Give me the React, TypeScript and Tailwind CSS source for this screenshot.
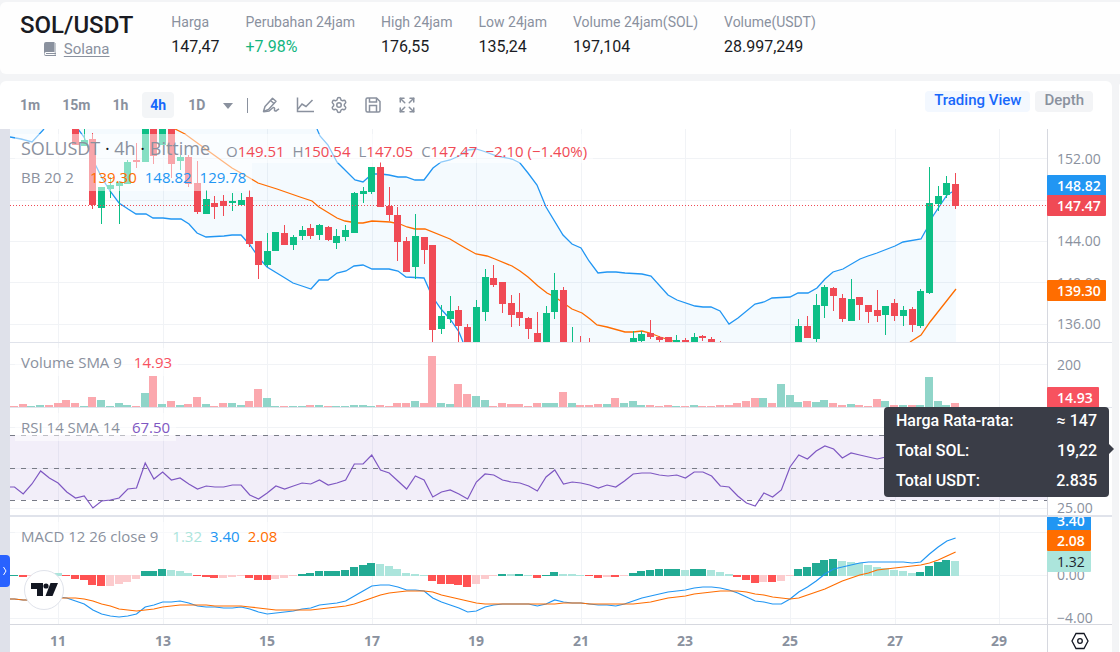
import { Expand, Settings } from "lucide-react";

const STEP = 8.714;
const FIRST_X = 14.5;
const barX = (index: number) => FIRST_X + index * STEP;

const UP = "#0dbf86";
const DOWN = "#f04a55";
const BLUE = "#2196f3";
const ORANGE = "#ff6d00";
const GRID = "#f1f3f6";

const stats = [
  { label: "Harga", value: "147,47" },
  { label: "Perubahan 24jam", value: "+7.98%", up: true },
  { label: "High 24jam", value: "176,55" },
  { label: "Low 24jam", value: "135,24" },
  { label: "Volume 24jam(SOL)", value: "197,104" },
  { label: "Volume(USDT)", value: "28.997,249" },
];

const intervals = ["1m", "15m", "1h", "4h", "1D"];

const days = [
  { label: "11", x: 58 },
  { label: "13", x: 163 },
  { label: "15", x: 267 },
  { label: "17", x: 372 },
  { label: "19", x: 476 },
  { label: "21", x: 581 },
  { label: "23", x: 685 },
  { label: "25", x: 790 },
  { label: "27", x: 895 },
  { label: "29", x: 999 },
];

// index, 1 = up / 0 = down, body top, body bottom, wick top, wick bottom
const candles = [
  [7, 0, 129, 145, 129, 145],
  [8, 1, 140, 146, 129, 146],
  [9, 0, 139, 205, 133, 209],
  [10, 1, 187, 208, 187, 224],
  [11, 1, 185, 189, 177, 198],
  [12, 1, 182, 186, 181, 224],
  [13, 1, 162, 184, 160, 184],
  [14, 0, 160, 162, 143, 168],
  [15, 1, 129, 162, 129, 162],
  [16, 0, 129, 156, 129, 164],
  [17, 1, 129, 145, 129, 145],
  [18, 0, 129, 164, 129, 178],
  [19, 1, 157, 161, 155, 170],
  [20, 0, 157, 184, 155, 187],
  [21, 0, 183, 212, 161, 214],
  [22, 1, 199, 214, 190, 214],
  [23, 0, 203, 207, 196, 219],
  [24, 0, 201, 206, 195, 216],
  [25, 1, 201, 203, 193, 211],
  [26, 1, 200, 205, 193, 205],
  [27, 0, 197, 244, 190, 247],
  [28, 0, 241, 265, 241, 279],
  [29, 1, 251, 265, 233, 267],
  [30, 1, 232, 251, 232, 251],
  [31, 0, 233, 245, 225, 245],
  [32, 1, 237, 245, 235, 250],
  [33, 1, 230, 236, 226, 240],
  [34, 0, 228, 236, 224, 239],
  [35, 1, 225, 235, 224, 240],
  [36, 0, 227, 240, 226, 241],
  [37, 1, 236, 243, 229, 249],
  [38, 1, 230, 237, 225, 241],
  [39, 1, 193, 233, 192, 233],
  [40, 1, 191, 194, 187, 203],
  [41, 1, 167, 192, 167, 194],
  [42, 0, 167, 207, 162, 207],
  [43, 0, 206, 215, 187, 221],
  [44, 0, 215, 242, 207, 261],
  [45, 0, 241, 272, 237, 272],
  [46, 1, 236, 267, 214, 279],
  [47, 0, 237, 250, 237, 264],
  [48, 0, 245, 330, 245, 342],
  [49, 1, 316, 329, 305, 334],
  [50, 1, 311, 319, 296, 323],
  [51, 0, 310, 326, 306, 342],
  [52, 0, 327, 342, 324, 342],
  [53, 1, 307, 342, 300, 342],
  [54, 1, 277, 312, 269, 321],
  [55, 0, 278, 285, 265, 287],
  [56, 0, 282, 304, 282, 313],
  [57, 0, 303, 315, 295, 327],
  [58, 0, 312, 318, 293, 326],
  [59, 0, 318, 329, 317, 339],
  [60, 0, 333, 342, 312, 342],
  [61, 1, 313, 342, 306, 342],
  [62, 1, 290, 312, 273, 319],
  [63, 0, 290, 342, 287, 342],
  [64, 1, 342, 343, 327, 342],
  [65, 0, 342, 343, 336, 342],
  [66, 0, 342, 343, 338, 342],
  [71, 1, 338, 342, 331, 342],
  [72, 1, 334, 341, 331, 342],
  [73, 0, 333, 337, 320, 339],
  [74, 0, 337, 340, 336, 342],
  [75, 0, 337, 342, 337, 342],
  [76, 1, 340, 342, 335, 342],
  [77, 0, 340, 342, 338, 342],
  [78, 1, 337, 342, 333, 342],
  [79, 0, 336, 338, 335, 341],
  [80, 0, 339, 342, 337, 342],
  [81, 0, 342, 343, 341, 342],
  [90, 1, 326, 342, 319, 342],
  [91, 0, 326, 338, 316, 338],
  [92, 1, 305, 339, 294, 342],
  [93, 1, 287, 306, 285, 318],
  [94, 0, 288, 296, 287, 311],
  [95, 0, 298, 319, 294, 322],
  [96, 1, 299, 321, 279, 321],
  [97, 0, 297, 305, 297, 320],
  [98, 0, 305, 312, 305, 323],
  [99, 0, 310, 316, 290, 322],
  [100, 1, 306, 315, 306, 335],
  [101, 0, 303, 316, 299, 321],
  [102, 1, 310, 316, 306, 326],
  [103, 0, 309, 325, 307, 332],
  [104, 1, 291, 326, 289, 328],
  [105, 1, 203, 293, 167, 294],
  [106, 1, 196, 204, 186, 211],
  [107, 1, 183, 195, 176, 198],
  [108, 0, 184, 206, 173, 209],
];

const upperBand =
  "317,129 320,136 328,145 337,162 355,180 363,182 372,174 381,174 389,175 398,177 406,177 415,180 424,180 433,168 441,162 450,160 459,156 468,150 476,149 483,151 497,156 512,159 520,163 528,173 537,185 546,207 563,235 572,244 581,248 589,261 598,273 607,272 616,272 625,273 642,274 651,276 668,295 677,300 695,306 703,307 711,307 720,311 729,324 738,318 755,304 764,302 772,298 790,297 798,293 808,293 817,288 825,279 833,272 843,269 860,259 868,256 877,253 895,246 903,242 921,239 926,230 933,216 947,195 952,192 956,191";
const lowerBandStart = "10,137 21,139 32,142 44,129";
const lowerBand =
  "78,129 84,137 93,160 102,178 110,191 119,203 128,209 136,214 146,214 153,218 163,218 171,219 181,219 189,224 197,233 206,237 224,236 232,235 241,235 250,245 259,258 267,267 285,278 293,283 302,286 311,289 319,280 328,280 337,273 346,271 354,266 363,265 372,269 389,269 398,271 406,277 424,278 432,296 441,309 450,319 459,332 463,342";
const middleBand =
  "175,129 185,134 207,150 232,168 248,177 258,183 277,189 300,197 312,201 319,207 337,218 345,221 357,223 363,223 372,221 390,222 400,224 407,227 415,229 425,229 450,239 460,245 467,249 476,254 487,256 495,259 512,266 520,271 528,277 538,286 547,293 555,297 572,309 582,313 590,319 597,325 607,327 625,332 633,332 642,331 650,333 660,337 673,341 677,343";
const middleBandEnd = "910,342 921,335 930,322 956,289";

const volumes =
  "r1 r3 g1 g2 r2 r4 r7 r4 g1 r10 g7 g1 g4 g2 r1 g14 r31 g3 r6 g2 r3 r10 g3 r1 r4 g4 g2 r6 r18 g9 g1 r1 g1 g1 r2 g2 r1 g1 g1 g2 g2 g1 r2 r1 r4 r4 g6 r4 r51 g4 g3 r23 r13 g11 g7 r1 r4 r3 r3 r1 r4 g4 g4 r15 g4 r2 r2 r3 g3 r9 g4 g6 g2 r2 r1 r2 g1 r1 g2 r1 r1 r2 r2 r4 r6 r9 g9 r4 g23 g12 g5 r6 g5 g7 r4 r2 g3 r2 r1 r8 g6 r2 g2 r2 g2 g30 g6 g2 r4".split(
    " ",
  );

// capital letter = growing bar, small letter = shrinking bar
const histogram =
  "G1 R2 r1 G2 G3 g3 R1 R4 R5 R10 R11 r11 r9 r7 r4 G5 G5 G7 g6 g5 g3 R1 R2 R3 r3 r2 r1 R3 R5 R5 r4 r3 r1 G2 G3 G5 G5 G5 G6 G9 G11 G13 g12 g10 g7 g3 g2 g1 R6 R9 R9 R10 R12 r9 r4 r1 G2 g2 G2 g1 R3 G1 G4 g2 g2 g1 R1 R3 r2 R2 r1 G3 G5 G6 G7 G7 G7 g6 G7 G7 g6 g4 g2 R2 R5 R8 r7 R7 r6 r1 G7 G9 G13 G16 G17 g15 g14 g13 g11 g9 g8 g6 g5 g3 G4 G10 G14 G16 g15".split(
    " ",
  );

const histogramColors: Record<string, string> = {
  G: "#22ab94",
  g: "#ace5dc",
  R: "#ff5252",
  r: "#fccbcd",
};

const rsi = [
  487, 494, 484, 471, 478, 483, 492, 498, 496, 508, 501, 500, 498, 489, 488,
  463, 479, 472, 480, 478, 484, 489, 486, 487, 487, 485, 485, 495, 499, 493,
  486, 489, 486, 483, 484, 480, 485, 483, 480, 464, 464, 455, 470, 473, 481,
  489, 476, 480, 497, 492, 490, 494, 499, 482, 474, 475, 480, 482, 483, 486,
  491, 477, 470, 484, 482, 483, 485, 488, 485, 487, 481, 474, 473, 473, 475,
  476, 475, 478, 472, 472, 476, 486, 487, 496, 503, 506, 493, 497, 490, 467,
  455, 459, 451, 446, 449, 458, 453, 455, 457, 459, 457,
];

const macd = [
  599, 600, 600, 599, 598, 597, 598, 601, 604, 610, 614, 616, 617, 616, 614,
  607, 605, 602, 602, 601, 603, 606, 607, 607, 608, 608, 607, 609, 612, 614,
  613, 612, 611, 609, 608, 605, 604, 603, 601, 596, 591, 586, 585, 585, 587,
  590, 590, 591, 598, 602, 605, 608, 612, 611, 607, 605, 604, 604, 604, 604,
  606, 604, 600, 602, 603, 603, 604, 605, 605, 606, 604, 601, 598, 596, 594,
  592, 591, 590, 588, 587, 587, 588, 590, 593, 597, 601, 602, 604, 604, 599,
  592, 587, 581, 574, 569, 567, 565, 563, 562, 562, 562, 562, 562, 563, 562,
  554, 547, 541, 538,
];

const signal = [
  599, 600, 600, 599, 598, 598, 598, 598, 599, 601, 604, 606, 609, 610, 611,
  610, 609, 607, 606, 605, 605, 605, 605, 606, 606, 606, 606, 607, 608, 609,
  610, 610, 610, 610, 610, 609, 608, 607, 606, 604, 601, 598, 595, 593, 592,
  591, 591, 591, 592, 595, 597, 599, 601, 603, 604, 604, 604, 604, 604, 604,
  604, 604, 604, 603, 603, 603, 604, 604, 604, 604, 604, 604, 603, 602, 600,
  598, 597, 596, 594, 593, 592, 591, 591, 591, 592, 594, 595, 597, 598, 599,
  598, 595, 592, 589, 585, 581, 578, 575, 573, 570, 569, 568, 567, 566, 565,
  563, 560, 556, 552,
];

const toPoints = (values: number[]) =>
  `10,${values[0]} ` + values.map((y, i) => `${barX(i)},${y}`).join(" ");

type PaneProps = {
  top: number;
  height: number;
  className: string;
  grid: number[];
  label: string;
  children: React.ReactNode;
};

const Plot = ({ top, height, className, grid, label, children }: PaneProps) => (
  <svg
    role="img"
    aria-label={label}
    viewBox={`10 ${top} 1037 ${height}`}
    preserveAspectRatio="none"
    className={`block w-full min-w-0 flex-1 ${className}`}>
    {days.map((day) => (
      <rect key={day.x} x={day.x} y={top} width={1} height={height} fill={GRID} />
    ))}
    {grid.map((y) => (
      <rect key={y} x={10} y={y} width={1037} height={1} fill={GRID} />
    ))}
    {children}
  </svg>
);

type Tick = { y: number; text: string };
type Badge = Tick & { fill: string; width: number; dark?: boolean };

type ScaleProps = {
  top: number;
  height: number;
  className: string;
  ticks: Tick[];
  badges: Badge[];
};

const Scale = ({ top, height, className, ticks, badges }: ScaleProps) => (
  <svg
    viewBox={`0 ${top} 65 ${height}`}
    className={`block w-[65px] shrink-0 overflow-hidden text-[14px] ${className}`}>
    <rect x={0} y={top} width={1} height={height} fill="#d6d8df" />
    {ticks.map((tick) => (
      <text key={tick.text} x={10} y={tick.y + 5} fill="#8a919e">
        {tick.text}
      </text>
    ))}
    {badges.map((badge) => (
      <g key={badge.text}>
        <rect x={0} y={badge.y - 10} width={badge.width} height={21} rx={1} fill={badge.fill} />
        <text
          x={10}
          y={badge.y + 6}
          fontWeight={badge.dark ? 400 : 600}
          fill={badge.dark ? "#20242f" : "#ffffff"}>
          {badge.text}
        </text>
      </g>
    ))}
  </svg>
);

const Ohlc = ({ name, value }: { name: string; value: string }) => (
  <span>
    {name}
    <span className="text-[#f04a55]">{value}</span>
  </span>
);

const PricePane = () => (
  <div className="relative flex border-b border-[#e0e3eb]">
    <Plot
      top={129}
      height={213}
      className="h-[213px]"
      label="Price"
      grid={[158, 200, 241, 282, 324]}>
      <polygon
        fill="#2196f3"
        fillOpacity={0.05}
        points={`10,129 ${lowerBandStart} ${lowerBand} 956,342 ${upperBand.split(" ").reverse().join(" ")}`}
      />
      <g fill="none" strokeWidth={1.3}>
        <polyline points={middleBand} stroke={ORANGE} />
        <polyline points={middleBandEnd} stroke={ORANGE} />
        <polyline points={upperBand} stroke={BLUE} />
        <polyline points={lowerBandStart} stroke={BLUE} />
        <polyline points={lowerBand} stroke={BLUE} />
      </g>
      {candles.map(([index, up, top, bottom, high, low]) => {
        const x = Math.floor(barX(index));
        return (
          <g key={index} fill={up ? UP : DOWN}>
            <rect x={x} y={high} width={1} height={low - high} />
            <rect x={x - 3} y={top} width={7} height={bottom - top} />
          </g>
        );
      })}
      <line x1={10} x2={1047} y1={205.5} y2={205.5} stroke={DOWN} strokeDasharray="1 2" />
    </Plot>
    <Scale
      top={129}
      height={213}
      className="h-[213px]"
      ticks={[
        { y: 159, text: "152.00" },
        { y: 241, text: "144.00" },
        { y: 283, text: "140.00" },
        { y: 324, text: "136.00" },
      ]}
      badges={[
        { y: 185, text: "148.82", fill: BLUE, width: 59 },
        { y: 205, text: "147.47", fill: DOWN, width: 59 },
        { y: 290, text: "139.30", fill: ORANGE, width: 59 },
      ]}
    />
    <div className="absolute top-[5px] left-[5px] flex flex-col items-start text-[15px] text-[#8a919e]">
      <div className="flex h-[29px] items-center gap-4 bg-white/50 px-1.5">
        <h2 className="text-[18px]">
          SOLUSDT <span className="text-[#131722]">·</span> 4h{" "}
          <span className="text-[#131722]">·</span> Bittime
        </h2>
        <p className="flex gap-2 pt-1.5">
          <Ohlc name="O" value="149.51" />
          <Ohlc name="H" value="150.54" />
          <Ohlc name="L" value="147.05" />
          <Ohlc name="C" value="147.47" />
          <span className="text-[#f04a55]">−2.10 (−1.40%)</span>
        </p>
      </div>
      <div className="flex h-7 items-center gap-2 bg-white/50 px-1.5">
        <span className="mr-2">BB 20 2</span>
        <span className="text-[#ff6d00]">139.30</span>
        <span className="text-[#2196f3]">148.82</span>
        <span className="text-[#2196f3]">129.78</span>
      </div>
    </div>
  </div>
);

const VolumePane = () => (
  <div className="relative flex border-b border-[#e0e3eb]">
    <Plot top={343} height={64} className="h-16" label="Volume" grid={[364]}>
      {volumes.map((bar, index) => {
        const size = Number(bar.slice(1));
        return (
          <rect
            key={index}
            x={Math.floor(barX(index)) - 4}
            y={407 - size}
            width={8}
            height={size}
            fill={bar[0] === "g" ? "#90d5c9" : "#fba8ae"}
          />
        );
      })}
    </Plot>
    <Scale
      top={343}
      height={64}
      className="h-16"
      ticks={[{ y: 365, text: "200" }]}
      badges={[{ y: 397, text: "14.93", fill: "#f7525f", width: 52 }]}
    />
    <div className="absolute top-[5px] left-[5px] flex h-7 items-center gap-3 bg-white/50 px-1.5 text-[15px] text-[#8a919e]">
      Volume SMA 9 <span className="text-[#f7525f]">14.93</span>
    </div>
  </div>
);

const RsiPane = () => (
  <div className="relative flex border-b-2 border-[#e0e3eb]">
    <Plot top={408} height={107} className="h-[107px]" label="RSI" grid={[427, 468, 508]}>
      <rect x={10} y={435} width={1037} height={65} fill="#7e57c2" fillOpacity={0.1} />
      {[435.5, 468.5, 500.5].map((y) => (
        <line key={y} x1={10} x2={1047} y1={y} y2={y} stroke="#787b86" strokeDasharray="5 6" />
      ))}
      <polyline points={toPoints(rsi)} fill="none" stroke="#7e57c2" strokeWidth={1.2} />
    </Plot>
    <Scale
      top={408}
      height={107}
      className="h-[107px]"
      ticks={[{ y: 508, text: "25.00" }]}
      badges={[]}
    />
    <div className="absolute top-[5px] left-[5px] flex h-7 items-center gap-3 bg-white/50 px-1.5 text-[15px] text-[#8a919e]">
      RSI 14 SMA 14 <span className="text-[#7e57c2]">67.50</span>
    </div>
  </div>
);

const MacdPane = () => (
  <div className="relative flex border-b border-[#d6d8df]">
    <Plot top={517} height={107} className="h-[107px]" label="MACD" grid={[532, 575, 618]}>
      {histogram.map((bar, index) => {
        const size = Number(bar.slice(1));
        const positive = bar[0].toUpperCase() === "G";
        return (
          <rect
            key={index}
            x={Math.floor(barX(index)) - 4}
            y={positive ? 576 - size : 575}
            width={8}
            height={size}
            fill={histogramColors[bar[0]]}
          />
        );
      })}
      <polyline points={toPoints(macd)} fill="none" stroke={BLUE} strokeWidth={1.2} />
      <polyline points={toPoints(signal)} fill="none" stroke={ORANGE} strokeWidth={1.2} />
    </Plot>
    <Scale
      top={517}
      height={107}
      className="h-[107px]"
      ticks={[
        { y: 575, text: "0.00" },
        { y: 618, text: "−4.00" },
      ]}
      badges={[
        { y: 520, text: "3.40", fill: BLUE, width: 44 },
        { y: 540, text: "2.08", fill: ORANGE, width: 44 },
        { y: 561, text: "1.32", fill: "#ace5dc", width: 44, dark: true },
      ]}
    />
    <div className="absolute top-[5px] left-[5px] flex h-7 items-center gap-2 bg-white/50 px-1.5 text-[15px] text-[#8a919e]">
      <span className="mr-1.5">MACD 12 26 close 9</span>
      <span className="text-[#ace5dc]">1.32</span>
      <span className="text-[#2196f3]">3.40</span>
      <span className="text-[#ff6d00]">2.08</span>
    </div>
    <a
      href="#tradingview"
      aria-label="TradingView"
      className="absolute bottom-[14px] left-[14px] flex size-10 items-center justify-center rounded-full border border-[#e0e3eb] bg-white">
      <svg viewBox="0 0 28 14" className="h-[14px] w-7" fill="#131722">
        <path d="M1 0h12v13H7V6H1z" />
        <circle cx="16" cy="3" r="2.6" />
        <path d="M20.500 0H28l-5.500 13h-7z" />
      </svg>
    </a>
  </div>
);

const TimeAxis = () => (
  <div className="flex h-[27px]">
    <svg className="h-[27px] min-w-0 flex-1 text-[14px] font-bold" fill="#8a919e">
      {days.map((day) => (
        <text key={day.label} x={`${((day.x - 10) / 1037) * 100}%`} y={21} textAnchor="middle">
          {day.label}
        </text>
      ))}
    </svg>
    <button
      type="button"
      aria-label="Scale settings"
      className="flex w-[65px] items-end justify-center border-l border-[#d6d8df] pb-0.5 text-[#131722]">
      <svg viewBox="0 0 18 18" className="size-[18px]" fill="none" stroke="currentColor" strokeWidth={1.3}>
        <path d="M5 1.500h8L17 9l-4 7.500H5L1 9z" />
        <circle cx="9" cy="9" r="2.300" />
      </svg>
    </button>
  </div>
);

const Tooltip = () => (
  <div
    role="tooltip"
    className="absolute top-[326px] right-[3px] w-[225px] rounded bg-[#3a3d47] px-3 pt-px pb-[3px] font-['Roboto',sans-serif] text-[16px] leading-[26px] font-medium text-white">
    <dl className="grid grid-cols-[1fr_auto] gap-y-1">
      <dt>Harga Rata-rata:</dt>
      <dd className="text-right">≈ 147</dd>
      <dt>Total SOL:</dt>
      <dd className="text-right">19,22</dd>
      <dt>Total USDT:</dt>
      <dd className="text-right">2.835</dd>
    </dl>
    <svg viewBox="0 0 5 10" className="absolute top-[37px] left-full h-[10px] w-[5px]" fill="#3a3d47">
      <path d="M0 0l5 5-5 5z" />
    </svg>
  </div>
);

const Header = () => (
  <header className="flex h-[72px] gap-[38px] rounded-l-md bg-[#fefefe] pl-5">
    <div className="flex flex-col items-center pt-[7px]">
      <h1 className="text-[24px] leading-8 font-medium text-[#1a1b23]">SOL/USDT</h1>
      <a href="#solana" className="flex items-center gap-2 text-[15px] leading-4 text-[#8a919e]">
        <svg viewBox="0 0 12 14" className="h-[14px] w-3" fill="currentColor">
          <path d="M2 0h8.500v10H2a1.500 1.500 0 0 0 0 3H12v1H2a2 2 0 0 1-2-2V2a2 2 0 0 1 2-2z" />
          <path d="M2 11h10v1H2z" />
          <path d="M11.500 1v12h-.7V1z" />
        </svg>
        <span className="underline underline-offset-2">Solana</span>
      </a>
    </div>
    <dl className="flex gap-[26px] pt-2 whitespace-nowrap">
      {stats.map((stat) => (
        <div key={stat.label}>
          <dt className="text-[14px] leading-6 text-[#8a919e]">{stat.label}</dt>
          <dd
            className={
              stat.up
                ? "text-[16px] leading-[26px] text-[#12b57f]"
                : "text-[16px] leading-[26px] text-[#1a1b23]"
            }>
            {stat.value}
          </dd>
        </div>
      ))}
    </dl>
  </header>
);

const ToolButton = ({ label, children }: { label: string; children: React.ReactNode }) => (
  <button type="button" aria-label={label} className="flex size-[18px] items-center justify-center">
    {children}
  </button>
);

const Toolbar = () => (
  <div className="flex h-12 items-start justify-between text-[#8a919e]">
    <div className="flex items-center gap-1.5 pt-[11px] pl-3 text-[14px] font-bold">
      {intervals.map((interval) => (
        <button
          key={interval}
          type="button"
          className={
            interval === "4h"
              ? "h-[26px] rounded bg-[#f3f5f7] px-2 text-[#1868fb]"
              : "h-[26px] rounded px-2"
          }>
          {interval}
        </button>
      ))}
      <button type="button" aria-label="More intervals" className="flex h-[26px] items-center pt-0.5 pl-1">
        <svg viewBox="0 0 10 6" className="h-1.5 w-2.5" fill="currentColor">
          <path d="M0 0h10L5 6z" />
        </svg>
      </button>
      <span className="mx-2 h-[15px] w-px bg-[#8a919e]" />
      <div className="flex items-center gap-4">
        <ToolButton label="Draw">
          <svg viewBox="0 0 18 18" className="size-[18px]" fill="none" stroke="currentColor" strokeWidth={1.5}>
            <path d="M1.500 15.500L3 10.500 10.500 2.200 14 5.300 6.500 13.500z" strokeLinejoin="round" />
            <path d="M8.500 4.500l3.500 3M1.500 15.800L7 15l3.500-3c1.500-1 2.500 0 2 1.500-.4 1.500 1.200 2 2.300.9l2.200-1.600" />
          </svg>
        </ToolButton>
        <ToolButton label="Indicators">
          <svg viewBox="0 0 18 18" className="size-[18px]" fill="none" stroke="currentColor" strokeWidth={1.5}>
            <path d="M1.500 1.500v14H18" />
            <path d="M2 13l4-5 4 2.500 6.500-6.500" />
          </svg>
        </ToolButton>
        <ToolButton label="Settings">
          <Settings size={18} strokeWidth={2} />
        </ToolButton>
        <ToolButton label="Save">
          <svg viewBox="0 0 18 18" className="size-[18px]" fill="none" stroke="currentColor" strokeWidth={1.5}>
            <path d="M3.500 2h9L16 5.500v9a1.500 1.500 0 0 1-1.500 1.500h-11A1.500 1.500 0 0 1 2 14.500v-11A1.500 1.500 0 0 1 3.500 2z" />
            <path d="M5.500 2v4h7V2M5.500 16V9.500h7V16" />
          </svg>
        </ToolButton>
        <ToolButton label="Full screen">
          <Expand size={18} strokeWidth={2} />
        </ToolButton>
      </div>
    </div>
    <div className="flex gap-[5px] pt-2.5 pr-[19px] text-[15px] font-medium">
      <button type="button" className="h-[21px] rounded bg-[#f3f8ff] px-[9px] pb-0.5 leading-[19px] text-[#1868fb]">
        Trading View
      </button>
      <button type="button" className="h-[21px] rounded bg-[#f3f4f6] px-[9px] pb-0.5 leading-[19px]">
        Depth
      </button>
    </div>
  </div>
);

const App = () => (
  <div className="min-h-screen bg-[#f3f4f6] pt-0.5 font-['Roboto',sans-serif]">
    <Header />
    <div className="mt-[7px] flex gap-[7px]">
      <main className="relative min-w-0 flex-1 rounded-t-md bg-white">
        <Toolbar />
        <div className="flex font-['Open_Sans',sans-serif]">
          <div className="relative w-2.5 shrink-0 bg-[#dfe1ea]">
            <button
              type="button"
              aria-label="Open drawing tools"
              className="absolute top-[426px] left-0 flex h-8 w-2.5 items-center justify-center rounded-r bg-[#2962ff]">
              <svg viewBox="0 0 4 8" className="h-2 w-1" fill="none" stroke="#ffffff">
                <path d="M.5 0l2.500 4L.5 8" />
              </svg>
            </button>
          </div>
          <div className="min-w-0 flex-1">
            <PricePane />
            <VolumePane />
            <RsiPane />
            <MacdPane />
            <TimeAxis />
          </div>
        </div>
        <Tooltip />
      </main>
      <aside className="mt-[3px] w-px rounded-tl-md bg-white" />
    </div>
  </div>
);

export default App;
